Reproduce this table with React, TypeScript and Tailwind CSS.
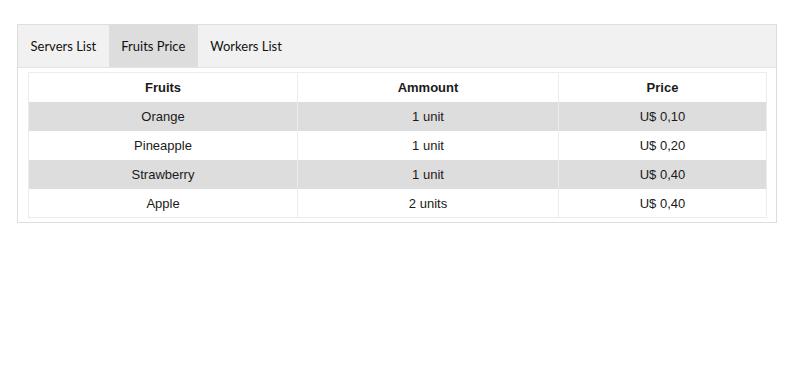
import { useState } from "react";

const TABS = ["Servers List", "Fruits Price", "Workers List"];

const FRUITS = [
  { name: "Orange", amount: "1 unit", price: "U$ 0,10" },
  { name: "Pineapple", amount: "1 unit", price: "U$ 0,20" },
  { name: "Strawberry", amount: "1 unit", price: "U$ 0,40" },
  { name: "Apple", amount: "2 units", price: "U$ 0,40" },
];

export default function App() {
  const [tab, setTab] = useState("Fruits Price");

  return (
    <div className="min-h-[385px] bg-white pl-[17px] pt-[24px]">
      <div className="w-[760px] border border-[#dedede]">
        <div className="flex h-[43px] border-b border-[#e4e4e4] bg-[#f1f1f1] font-['Lato',sans-serif] text-[13px] text-[#111]">
          {TABS.map((t) => (
            <button
              key={t}
              type="button"
              onClick={() => setTab(t)}
              className={
                tab === t
                  ? "h-[42px] bg-[#dddddd] px-[12.5px] pt-[2px]"
                  : "h-[42px] px-[12.5px] pt-[2px]"
              }
            >
              {t}
            </button>
          ))}
        </div>

        <div className="px-[10px] pb-[4px] pt-[4px]">
          <table className="w-[739px] border-collapse border border-[#ececec] font-['Liberation_Sans',Arial,sans-serif] text-[13px] text-[#1a1a1a]">
            <colgroup>
              <col className="w-[269px]" />
              <col className="w-[261px]" />
              <col />
            </colgroup>
            <thead>
              <tr className="h-[29px] bg-white">
                <th className="border-x border-[#ececec] pt-[1px] font-bold">Fruits</th>
                <th className="border-x border-[#ececec] pt-[1px] font-bold">Ammount</th>
                <th className="border-x border-[#ececec] pt-[1px] font-bold">Price</th>
              </tr>
            </thead>
            <tbody>
              {FRUITS.map((f, i) => (
                <tr key={f.name} className={i % 2 === 0 ? "h-[29px] bg-[#dddddd]" : "h-[29px] bg-white"}>
                  <td className="border-x border-[#ececec] pt-[1px] text-center">{f.name}</td>
                  <td className="border-x border-[#ececec] pt-[1px] text-center">{f.amount}</td>
                  <td className="border-x border-[#ececec] pt-[1px] text-center">{f.price}</td>
                </tr>
              ))}
            </tbody>
          </table>
        </div>
      </div>
    </div>
  );
}
